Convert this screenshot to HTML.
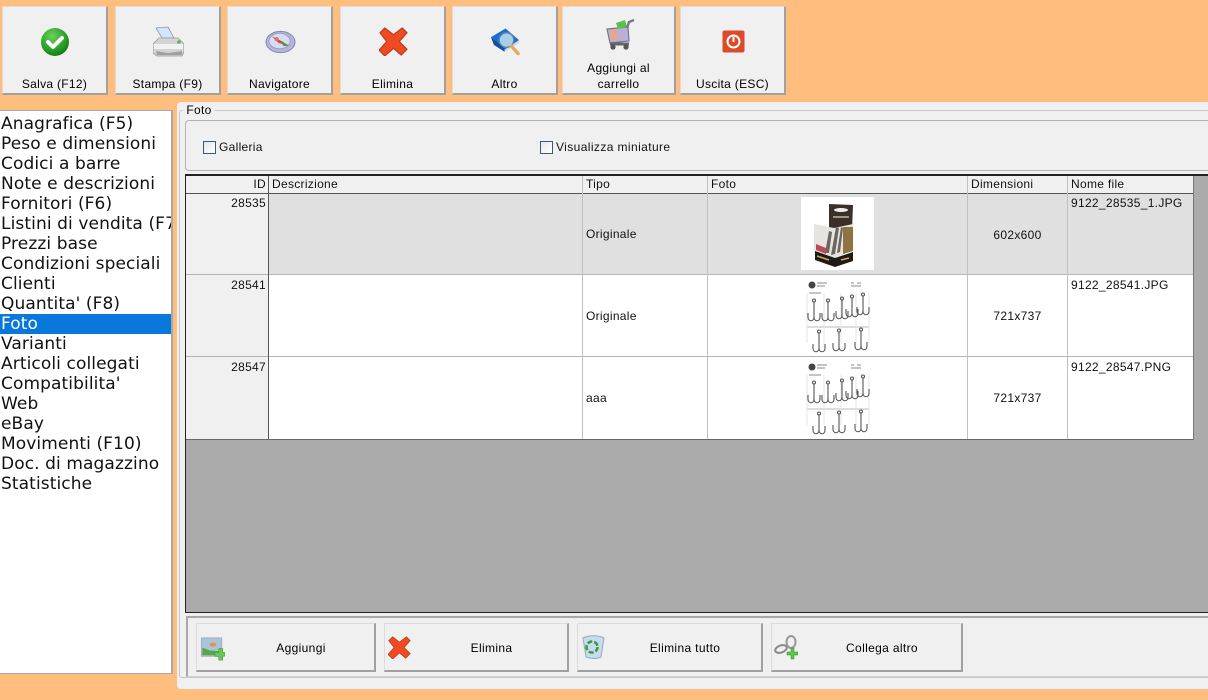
<!DOCTYPE html>
<html><head><meta charset="utf-8"><style>
html,body{margin:0;padding:0;width:1208px;height:700px;overflow:hidden;background:#ffbe7d}
*{box-sizing:border-box}
body{position:relative;font:12px "Liberation Sans",sans-serif;color:#000}
.a{position:absolute}
.btn{position:absolute;background:#f0f0f0;border:1px solid #dcdcdc;border-right:2px solid #a0a0a0;border-bottom:2px solid #a0a0a0;text-align:center}
.btn span{position:absolute;left:0;right:0;line-height:16px;letter-spacing:.3px}
.btn svg{position:absolute;filter:blur(.3px)}
.bb span{padding-left:31px;letter-spacing:.35px}
.list{position:absolute;left:0;top:110px;width:173px;height:564px;background:#fff;border:1px solid #a8a8a8;border-left:0;border-right:2px solid #a8a8a8;overflow:hidden;font:17px/20px "DejaVu Sans",sans-serif;color:#111;padding-top:3px;white-space:nowrap}
.list div{height:20px;padding-left:1px;letter-spacing:.1px}
.list .s{background:#0878dc;color:#fff;height:20px}
.c{position:absolute;overflow:hidden;white-space:nowrap;line-height:16px;letter-spacing:.3px;color:#111}
.cb{position:absolute;width:13px;height:13px;border:1px solid #3c5a78;background:linear-gradient(135deg,#e6e6e6,#fff)}
.v{position:absolute;width:1px;background:#c0c0c0}
.h{position:absolute;height:1px;background:#b4b4b4}
</style></head><body>

<div class="btn" style="left:2px;top:6px;width:106px;height:89px"><svg style="left:37px;top:20px" width="30" height="30" viewBox="0 0 30 30"><defs><radialGradient id="g" cx=".4" cy=".3" r=".8"><stop offset="0" stop-color="#6fd05a"/><stop offset=".6" stop-color="#28a028"/><stop offset="1" stop-color="#0f6e14"/></radialGradient></defs><circle cx="15" cy="15" r="14" fill="url(#g)"/><path d="M8 15l5 5 9-9" fill="none" stroke="#fff" stroke-width="4" stroke-linecap="round" stroke-linejoin="round"/></svg><span style="top:69px">Salva (F12)</span></div>

<div class="btn" style="left:115px;top:6px;width:106px;height:89px"><svg style="left:37px;top:19px" width="31" height="31" viewBox="0 0 31 31"><path d="M3 2l12-1 6 11H9z" fill="#d5e4f8" stroke="#8a9aaa" stroke-width=".8"/><path d="M0 18l6-6h19l6 6v8l-2 4H4l-4-3z" fill="#d4d4d4" stroke="#999" stroke-width=".8"/><path d="M1 18h29v5H1z" fill="#f2f2f2"/><path d="M3 25l12 2 14-2v4H4z" fill="#a0a0a0"/><circle cx="26" cy="16" r="1.8" fill="#66aa66"/></svg><span style="top:69px">Stampa (F9)</span></div>

<div class="btn" style="left:227px;top:6px;width:106px;height:89px"><svg style="left:37px;top:23px" width="31" height="24" viewBox="0 0 32 24"><ellipse cx="16" cy="12" rx="15" ry="11" fill="#b6b4dc" stroke="#8684ae"/><ellipse cx="15" cy="11" rx="11" ry="8" fill="#d8dcf0" stroke="#9a9ac0"/><path d="M7 6l10 5 8 5-11-3z" fill="#c8503c"/><path d="M16 11l9 5-6 0z" fill="#3f963f"/><circle cx="12" cy="9" r="2.2" fill="#e07060"/></svg><span style="top:69px">Navigatore</span></div>

<div class="btn" style="left:340px;top:6px;width:106px;height:89px"><svg style="left:38px;top:20px" width="29" height="29" viewBox="0 0 30 30"><path d="M6 1l9 7 9-7 5 5-8 9 8 8-6 6-8-7-9 8-6-6 8-9-7-9z" fill="#f04a22" stroke="#b83a18" stroke-width="1.2" stroke-linejoin="round"/></svg><span style="top:69px">Elimina</span></div>

<div class="btn" style="left:452px;top:6px;width:106px;height:89px"><svg style="left:37px;top:20px" width="31" height="30" viewBox="0 0 32 30"><path d="M1 10L16 1l14 12-15 10z" fill="#1c6fd0"/><path d="M1 10l3 8 11 7 0-3z" fill="#0f4fa0"/><path d="M15 23l15-10 0 3-15 9z" fill="#ccd8e8"/><circle cx="17" cy="13" r="7.5" fill="#a9cfe8" stroke="#5e88a8" stroke-width="1.4"/><path d="M22 19l7 8" stroke="#eda55e" stroke-width="3.5" stroke-linecap="round"/></svg><span style="top:69px">Altro</span></div>

<div class="btn" style="left:562px;top:6px;width:114px;height:89px"><svg style="left:42px;top:11px" width="30" height="32" viewBox="0 0 30 32"><path d="M2 11l21-2 1 14-19 2z" fill="#b8b0d8" stroke="#778" stroke-width="1.2"/><path d="M4 12l9-1 1 11-8 1z" fill="#e0a898"/><path d="M11 5l9-3 2 7-9 2z" fill="#58c24e"/><path d="M22 10l2-6 5-2" fill="none" stroke="#778" stroke-width="2.4"/><path d="M5 26h19" stroke="#666" stroke-width="3"/><circle cx="8" cy="29" r="2.6" fill="#555"/><circle cx="21" cy="29" r="2.6" fill="#555"/></svg><span style="top:53px">Aggiungi al<br>carrello</span></div>

<div class="btn" style="left:680px;top:6px;width:106px;height:89px"><svg style="left:41px;top:23px" width="23" height="23" viewBox="0 0 23 23"><rect width="22" height="22" x=".5" y=".5" rx="2" fill="#dc4a2a"/><circle cx="11.5" cy="11.5" r="6" fill="none" stroke="#fff" stroke-width="2"/><path d="M11.5 7v5" stroke="#fff" stroke-width="2"/></svg><span style="top:69px">Uscita (ESC)</span></div>

<div class="list"><div>Anagrafica (F5)</div><div>Peso e dimensioni</div><div>Codici a barre</div><div>Note e descrizioni</div><div>Fornitori (F6)</div><div>Listini di vendita (F7)</div><div>Prezzi base</div><div>Condizioni speciali</div><div>Clienti</div><div>Quantita' (F8)</div><div class="s">Foto</div><div>Varianti</div><div>Articoli collegati</div><div>Compatibilita'</div><div>Web</div><div>eBay</div><div>Movimenti (F10)</div><div>Doc. di magazzino</div><div>Statistiche</div></div>

<div class="a" style="left:177px;top:102px;width:1031px;height:587px;background:#f0f0f0;border-radius:4px 0 0 4px"></div>
<div class="a" style="left:179px;top:110px;width:1029px;height:568px;border:1px solid #c8c8c8;border-right:0;border-radius:3px 0 0 3px"></div>
<div class="a" style="left:183px;top:103px;width:32px;height:16px;background:#f0f0f0;text-align:center;line-height:15px;letter-spacing:.3px">Foto</div>

<div class="a" style="left:185px;top:120px;width:1023px;height:51px;border:1px solid #b4b4b4;border-right:0;border-radius:4px 0 0 4px"></div>
<div class="cb" style="left:203px;top:141px"></div><div class="c" style="left:219px;top:139px">Galleria</div>
<div class="cb" style="left:540px;top:141px"></div><div class="c" style="left:556px;top:139px;letter-spacing:.4px">Visualizza miniature</div>

<!-- grid -->
<div class="a" style="left:185px;top:174px;width:1023px;height:439px;background:#ababab;border-top:2px solid #222;border-left:1px solid #222;border-bottom:1px solid #222"></div>
<div class="a" style="left:186px;top:176px;width:1007px;height:18px;background:#f0f0f0;border-bottom:1px solid #555"></div>
<div class="a" style="left:186px;top:194px;width:82px;height:245px;background:#f0f0f0"></div>
<div class="a" style="left:269px;top:194px;width:924px;height:81px;background:#e0e0e0"></div>
<div class="a" style="left:269px;top:275px;width:924px;height:164px;background:#fff"></div>
<div class="a" style="left:186px;top:439px;width:1008px;height:1px;background:#666"></div>
<div class="a" style="left:1193px;top:176px;width:1px;height:264px;background:#777"></div>
<div class="h" style="left:186px;top:274px;width:1007px"></div>
<div class="h" style="left:186px;top:356px;width:1007px"></div>
<div class="a" style="left:268px;top:176px;width:1px;height:263px;background:#555"></div>
<div class="v" style="left:582px;top:176px;height:263px"></div>
<div class="v" style="left:707px;top:176px;height:263px"></div>
<div class="v" style="left:967px;top:176px;height:263px"></div>
<div class="v" style="left:1067px;top:176px;height:263px"></div>

<div class="c" style="left:186px;top:176px;width:80px;text-align:right">ID</div>
<div class="c" style="left:272px;top:176px">Descrizione</div>
<div class="c" style="left:586px;top:176px">Tipo</div>
<div class="c" style="left:711px;top:176px">Foto</div>
<div class="c" style="left:971px;top:176px">Dimensioni</div>
<div class="c" style="left:1071px;top:176px">Nome file</div>

<div class="c" style="left:186px;top:195px;width:80px;text-align:right">28535</div>
<div class="c" style="left:186px;top:277px;width:80px;text-align:right">28541</div>
<div class="c" style="left:186px;top:359px;width:80px;text-align:right">28547</div>
<div class="c" style="left:586px;top:226px">Originale</div>
<div class="c" style="left:586px;top:308px">Originale</div>
<div class="c" style="left:586px;top:390px">aaa</div>
<div class="c" style="left:968px;top:227px;width:99px;text-align:center">602x600</div>
<div class="c" style="left:968px;top:308px;width:99px;text-align:center">721x737</div>
<div class="c" style="left:968px;top:390px;width:99px;text-align:center">721x737</div>
<div class="c" style="left:1071px;top:195px">9122_28535_1.JPG</div>
<div class="c" style="left:1071px;top:277px">9122_28541.JPG</div>
<div class="c" style="left:1071px;top:359px">9122_28547.PNG</div>

<!-- product image -->
<svg class="a" style="left:801px;top:197px;filter:blur(.35px)" width="73" height="73" viewBox="0 0 73 73"><rect width="73" height="73" fill="#fff"/><path d="M28 7l24 1-1 25-23-2z" fill="#3c2f28"/><ellipse cx="40" cy="13" rx="7" ry="2" fill="#eee"/><path d="M32 20h16" stroke="#998" stroke-width="2"/><path d="M13 27l20 4 19-4v27l-19 7-20-6z" fill="#e6e3e0"/><path d="M24 56l4-22 3 1-3 21zM30 58l5-28 3 1-4 26zM36 56l4-26 2 1-3 24z" fill="#6c6660"/><path d="M42 30h10v24l-10 3z" fill="#8f7440"/><path d="M15 47l10 4 0 6-10-4z" fill="#c04858"/><path d="M14 54l20 7 18-6v9l-18 6-20-7z" fill="#1f1a16"/><path d="M16 59l12 4M40 63l8-2" stroke="#c8a860" stroke-width="1.5"/></svg>

<!-- hooks thumbnails -->
<svg class="a" style="left:806px;top:279px;filter:blur(.3px)" width="65" height="74" viewBox="0 0 65 74"><defs><g id="hk" fill="none" stroke="#555" stroke-width="1.1"><path d="M0 0v15c0 5-6 5-6 0v-4M0 15c0 5 6 5 6 0v-4"/><circle cx="0" cy="-1.5" r="1.5"/></g><g id="all"><circle cx="6" cy="6" r="3.5" fill="#444"/><path d="M11 4h10M11 7h8M3 14h12M45 4h3M51 4h4M45 7h10" stroke="#888"/><path d="M1 48h62" stroke="#bbb"/><path d="M1 14v50M18 14v50M35 14v50M50 14v50M63 14v50" stroke="#e4e4e4"/><use href="#hk" x="8" y="23"/><use href="#hk" x="22" y="23"/><use href="#hk" x="36" y="21"/><use href="#hk" x="46" y="19"/><use href="#hk" x="57" y="17"/><g transform="translate(13 54)"><use href="#hk"/></g><g transform="translate(33 53)"><use href="#hk"/></g><g transform="translate(55 52)"><use href="#hk"/></g></g></defs><use href="#all"/></svg>
<svg class="a" style="left:806px;top:361px;filter:blur(.3px)" width="65" height="74" viewBox="0 0 65 74"><use href="#all"/></svg>

<!-- bottom bar -->
<div class="a" style="left:186px;top:616px;width:1022px;height:61px;border-top:2px solid #a8a8a8;border-left:2px solid #a8a8a8;border-bottom:1px solid #d0d0d0"></div>

<div class="btn bb" style="left:196px;top:623px;width:180px;height:49px"><svg style="left:3px;top:12px" width="25" height="27" viewBox="0 0 25 28"><rect x="1" y="2" width="21" height="19" fill="#a9c4dc" stroke="#aab"/><path d="M2 20v-8l8 3 12 1v4z" fill="#58a848"/><ellipse cx="13" cy="9" rx="3.5" ry="2" fill="#ef8f3c"/><path d="M15 17h4v-4h4v4h2v4h-2v4h-4v-4h-4z" fill="#68c850" stroke="#3a9a30" stroke-width=".6"/></svg><span style="top:16px">Aggiungi</span></div>
<div class="btn bb" style="left:384px;top:623px;width:185px;height:49px"><svg style="left:3px;top:12px" width="23" height="23" viewBox="0 0 30 30"><path d="M6 1l9 7 9-7 5 5-8 9 8 8-6 6-8-7-9 8-6-6 8-9-7-9z" fill="#f04a22" stroke="#b83a18" stroke-linejoin="round"/></svg><span style="top:16px">Elimina</span></div>
<div class="btn bb" style="left:577px;top:623px;width:186px;height:49px"><svg style="left:4px;top:11px" width="23" height="24" viewBox="0 0 23 24"><path d="M1 3c6-3 15-3 21 0l-3 19c-4 2-10 2-15 0z" fill="#c6daf0" stroke="#9ab"/><circle cx="10" cy="12" r="5.5" fill="none" stroke="#3a9a3a" stroke-width="2.5" stroke-dasharray="5 2"/></svg><span style="top:16px">Elimina tutto</span></div>
<div class="btn bb" style="left:771px;top:623px;width:192px;height:49px"><svg style="left:2px;top:11px" width="24" height="25" viewBox="0 0 24 25"><ellipse cx="7" cy="14" rx="6" ry="3.5" fill="none" stroke="#888" stroke-width="2" transform="rotate(-20 7 14)"/><ellipse cx="17" cy="7" rx="4.5" ry="6" fill="none" stroke="#999" stroke-width="2"/><path d="M13 17h4v-4h3v4h4v3h-4v4h-3v-4h-4z" fill="#5cc84a" stroke="#2e8a26" stroke-width=".5"/></svg><span style="top:16px">Collega altro</span></div>

</body></html>
